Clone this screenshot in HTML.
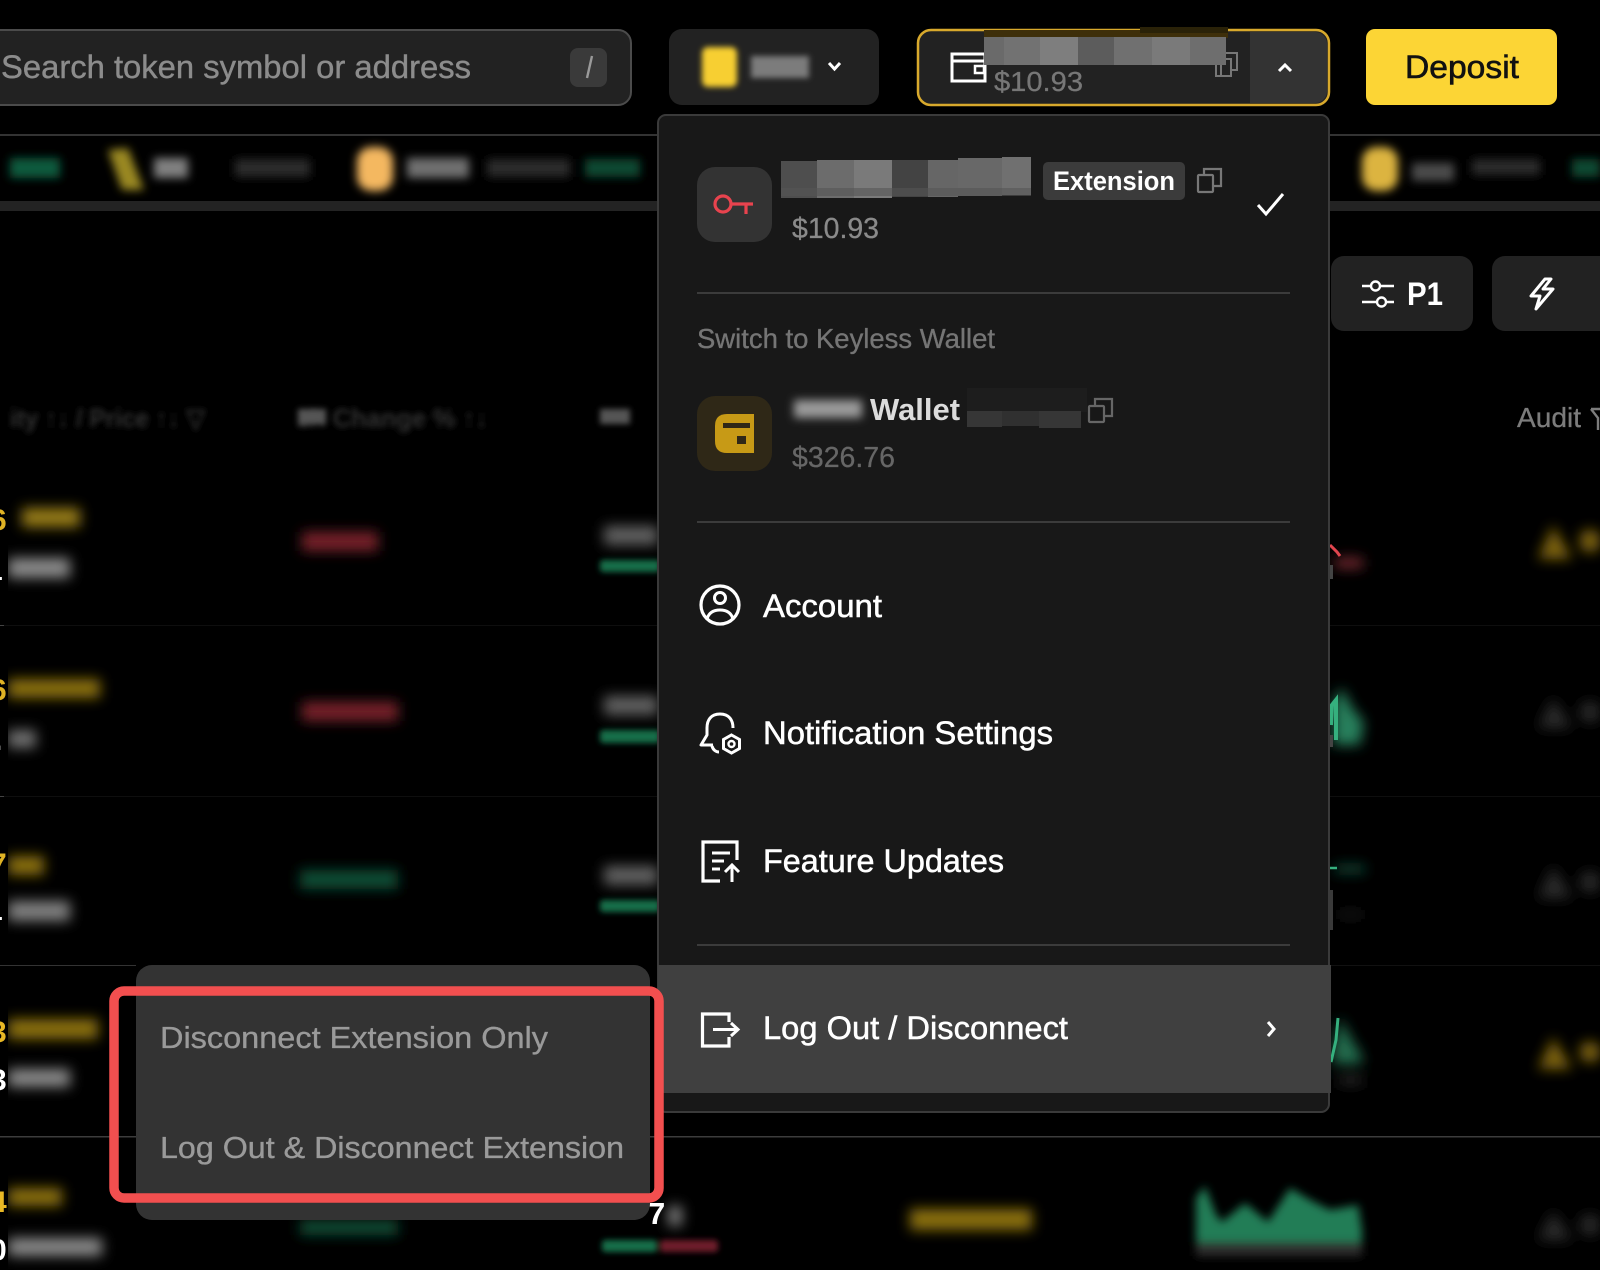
<!DOCTYPE html>
<html><head><meta charset="utf-8"><title>Wallet menu</title>
<style>
html,body{margin:0;padding:0;background:#000;width:1600px;height:1270px;overflow:hidden}
svg{display:block}
text{font-family:"Liberation Sans",sans-serif}
.m{fill:#fff;stroke:#fff;stroke-width:.5}
</style></head><body>
<svg width="1600" height="1270" viewBox="0 0 1600 1270" xmlns="http://www.w3.org/2000/svg">
<defs>
<filter id="b" filterUnits="userSpaceOnUse" x="-40" y="-40" width="1700" height="1350"><feGaussianBlur stdDeviation="6.500"/></filter>
<filter id="s" filterUnits="userSpaceOnUse" x="-40" y="-40" width="1700" height="1350"><feGaussianBlur stdDeviation="4.500"/></filter>
<filter id="t" filterUnits="userSpaceOnUse" x="-40" y="-40" width="1700" height="1350"><feGaussianBlur stdDeviation="3"/></filter>
<clipPath id="cl"><rect x="8" y="0" width="1600" height="1270"/></clipPath>
<clipPath id="dg"><rect x="0" y="0" width="7" height="1270"/></clipPath>
</defs>
<rect width="1600" height="1270" fill="#000"/>

<!-- search -->
<rect x="-20" y="30" width="651" height="75" rx="13" fill="#222" stroke="#4b4b4b" stroke-width="2"/>
<text x="1" y="78" font-size="32" fill="#8c8c8c" stroke="#8c8c8c" stroke-width=".4" textLength="470" lengthAdjust="spacingAndGlyphs">Search token symbol or address</text>
<rect x="570" y="48" width="37" height="39" rx="8" fill="#3a3a3a"/>
<path d="M587 78L592 56" stroke="#9a9a9a" stroke-width="2.400" fill="none"/>

<!-- chain -->
<rect x="669" y="29" width="210" height="76" rx="13" fill="#222"/>
<g filter="url(#t)">
<rect x="702" y="47" width="35" height="40" rx="6" fill="#f7cf30"/>
<rect x="751" y="56" width="58" height="22" fill="#7c7c7c"/>
</g>
<path d="M829 63L834.500 69L840 63" fill="none" stroke="#fff" stroke-width="3"/>

<!-- wallet button -->
<rect x="918" y="30" width="411" height="75" rx="13" fill="#222" stroke="#d8a92c" stroke-width="2.500"/>
<path d="M1250 32H1316a12 12 0 0 1 11 11V92a12 12 0 0 1-11 11H1250Z" fill="#333"/>
<path d="M1279 71L1285 65L1291 71" fill="none" stroke="#fff" stroke-width="3"/>
<path d="M985 54H952V81H985V54M952 61H985" fill="none" stroke="#fff" stroke-width="3"/>
<rect x="975" y="66" width="9" height="7" fill="none" stroke="#fff" stroke-width="2.500"/>
<path d="M1221 59V76H1216M1221 59V53H1237V70H1231" fill="none" stroke="#777" stroke-width="2"/>
<rect x="1216" y="59" width="15" height="17" fill="none" stroke="#777" stroke-width="2"/>
<rect x="984" y="30" width="244" height="8" fill="#3e2f0a"/>
<rect x="1140" y="27" width="88" height="6" fill="#2a2208"/>
<rect x="984" y="37" width="20" height="28" fill="#6a6a6a"/>
<rect x="1004" y="37" width="36" height="28" fill="#727272"/>
<rect x="1040" y="37" width="38" height="28" fill="#7e7e7e"/>
<rect x="1078" y="37" width="36" height="28" fill="#5c5c5c"/>
<rect x="1114" y="37" width="38" height="28" fill="#707070"/>
<rect x="1152" y="37" width="38" height="28" fill="#7a7a7a"/>
<rect x="1190" y="37" width="36" height="28" fill="#6e6e6e"/>
<text x="994" y="91" font-size="28" fill="#777" stroke="#777" stroke-width=".3" textLength="89" lengthAdjust="spacingAndGlyphs">$10.93</text>

<!-- deposit -->
<rect x="1366" y="29" width="191" height="76" rx="9" fill="#fcd535"/>
<text x="1405" y="78" font-size="32" fill="#111" stroke="#111" stroke-width=".6" textLength="114" lengthAdjust="spacingAndGlyphs">Deposit</text>

<!-- ticker -->
<rect x="0" y="134" width="1600" height="2" fill="#333"/>
<rect x="0" y="201" width="1600" height="10" fill="#232323"/>
<g filter="url(#s)">
<rect x="10" y="158" width="50" height="20" fill="#0f5a3c"/>
<path d="M108 150L128 148L144 190H122Z" fill="#9a8824"/>
<rect x="154" y="158" width="34" height="20" fill="#808080"/>
<rect x="235" y="159" width="75" height="18" fill="#2c2c2c"/>
<rect x="357" y="147" width="36" height="44" rx="14" fill="#f4b860"/>
<rect x="407" y="158" width="62" height="20" fill="#707070"/>
<rect x="487" y="159" width="83" height="18" fill="#2a2a2a"/>
<rect x="585" y="159" width="55" height="18" fill="#0c4a32"/>
<rect x="1362" y="147" width="36" height="44" rx="14" fill="#dcb440"/>
<rect x="1412" y="163" width="42" height="18" fill="#4c4c4c"/>
<rect x="1472" y="159" width="68" height="16" fill="#2a2a2a"/>
<rect x="1572" y="159" width="28" height="18" fill="#0c4a32"/>
</g>

<!-- table header blur -->
<g filter="url(#t)" font-size="26" font-weight="700">
<text x="10" y="427" fill="#333" textLength="195" lengthAdjust="spacingAndGlyphs">ity ↑↓ / Price ↑↓ ▽</text>
<text x="296" y="427" fill="#333" textLength="192" lengthAdjust="spacingAndGlyphs">1h Change % ↑↓</text>
<rect x="298" y="409" width="28" height="15" fill="#555"/>
<rect x="600" y="409" width="30" height="15" fill="#555"/>
</g>

<!-- rows -->
<rect x="0" y="625" width="660" height="1" fill="#0e0e0e"/>
<rect x="0" y="796" width="660" height="1" fill="#0e0e0e"/>
<rect x="0" y="625" width="4" height="1" fill="#444"/>
<rect x="0" y="796" width="4" height="1" fill="#444"/>
<rect x="0" y="965" width="136" height="1" fill="#333"/>
<rect x="0" y="1136" width="1600" height="1.500" fill="#3c3c3c"/>
<rect x="1329" y="625" width="271" height="1" fill="#0e0e0e"/>
<rect x="1329" y="796" width="271" height="1" fill="#0e0e0e"/>
<rect x="1329" y="965" width="271" height="1" fill="#111"/>

<g filter="url(#b)" clip-path="url(#cl)">
<rect x="22" y="508" width="58" height="19" fill="#967b12"/>
<rect x="8" y="558" width="62" height="20" fill="#8a8a8a"/>
<rect x="302" y="532" width="76" height="19" fill="#78202a"/>
<rect x="604" y="526" width="54" height="19" fill="#606060"/>
<rect x="8" y="679" width="92" height="19" fill="#8a7010"/>
<rect x="8" y="730" width="28" height="18" fill="#707070"/>
<rect x="302" y="702" width="96" height="19" fill="#78202a"/>
<rect x="604" y="696" width="54" height="19" fill="#606060"/>
<rect x="8" y="856" width="36" height="19" fill="#8a7010"/>
<rect x="8" y="901" width="62" height="20" fill="#808080"/>
<rect x="300" y="870" width="98" height="19" fill="#0c4e34"/>
<rect x="604" y="866" width="54" height="19" fill="#606060"/>
<rect x="8" y="1019" width="90" height="20" fill="#8a7010"/>
<rect x="8" y="1069" width="62" height="18" fill="#8a8a8a"/>
<rect x="8" y="1188" width="54" height="18" fill="#8a7010"/>
<rect x="8" y="1238" width="94" height="18" fill="#8a8a8a"/>
<rect x="300" y="1220" width="98" height="15" fill="#0c4e34"/>
<rect x="910" y="1209" width="122" height="21" fill="#8a7010"/>
<rect x="668" y="1206" width="14" height="20" fill="#7a7a7a"/>
<path d="M1538 559L1553 525L1572 559Z" fill="#7e6410"/>
<rect x="1580" y="530" width="20" height="22" rx="8" fill="#7e6410"/>
<path d="M1538 728L1553 698L1572 728Z" fill="#2c2c2c"/>
<rect x="1580" y="702" width="20" height="20" rx="8" fill="#2c2c2c"/>
<path d="M1538 898L1553 866L1572 898Z" fill="#2c2c2c"/>
<rect x="1580" y="872" width="20" height="20" rx="8" fill="#2c2c2c"/>
<path d="M1538 1069L1553 1037L1572 1069Z" fill="#7e6410"/>
<rect x="1580" y="1042" width="20" height="20" rx="8" fill="#7e6410"/>
<path d="M1538 1240L1553 1211L1572 1240Z" fill="#2c2c2c"/>
<rect x="1580" y="1215" width="20" height="20" rx="8" fill="#2c2c2c"/>
<rect x="1335" y="558" width="28" height="10" fill="#7a2a30"/>
<path d="M1333 745L1334 700L1342 688L1352 708L1364 722L1360 745Z" fill="#277f5c"/>
<rect x="1335" y="866" width="30" height="6" fill="#186248"/>
<rect x="1338" y="912" width="25" height="5" fill="#222"/>
<path d="M1333 1048L1340 1018L1352 1040L1362 1056V1064H1333Z" fill="#206c4d"/>
<rect x="1338" y="1076" width="25" height="8" fill="#2a2a2a"/>
</g>
<g filter="url(#t)">
<rect x="600" y="560" width="60" height="12" rx="3" fill="#126e48"/>
<rect x="600" y="730" width="60" height="13" rx="3" fill="#126e48"/>
<rect x="600" y="900" width="60" height="12" rx="3" fill="#126e48"/>
<rect x="602" y="1240" width="55" height="12" rx="3" fill="#126e48"/>
<rect x="660" y="1240" width="58" height="12" rx="3" fill="#6e1c2a"/>
</g>
<g filter="url(#s)">
<rect x="1196" y="1234" width="166" height="22" fill="#2e2e2e"/>
<path d="M1196 1242V1198L1205 1186L1216 1215L1222 1222L1245 1203L1268 1222L1290 1188L1310 1200L1330 1210L1358 1205L1362 1230V1242Z" fill="#237d57"/>
</g>
<path d="M1330 545L1337 552L1340 556" stroke="#e0454e" stroke-width="3" fill="none"/>
<path d="M1331 725L1332 705L1336 700V740" stroke="#35b07e" stroke-width="4" fill="none"/>
<path d="M1330 868H1337" stroke="#35b07e" stroke-width="2.500" fill="none"/>
<path d="M1331 1062L1336 1040L1338 1018" stroke="#35b07e" stroke-width="3" fill="none"/>
<rect x="1330" y="565" width="3" height="14" fill="#444"/>
<rect x="1330" y="735" width="3" height="12" fill="#444"/>
<rect x="1330" y="890" width="3" height="40" fill="#3a3a3a"/>
<text x="648" y="1224" font-size="31" font-weight="700" fill="#fff">7</text>

<g font-size="30" font-weight="700" clip-path="url(#dg)">
<text x="-10" y="530" fill="#e0b325">6</text><text x="-14" y="580" fill="#fff">1</text>
<text x="-10" y="700" fill="#e0b325">6</text><text x="-6" y="750" fill="#fff">.</text>
<text x="-10" y="874" fill="#e0b325">7</text><text x="-14" y="920" fill="#fff">1</text>
<text x="-10" y="1042" fill="#e8b825">3</text><text x="-10" y="1090" fill="#fff">3</text>
<text x="-10" y="1212" fill="#e8b825">4</text><text x="-10" y="1260" fill="#fff">0</text>
</g>

<!-- P1 / bolt -->
<rect x="1331" y="256" width="142" height="75" rx="13" fill="#222"/>
<path d="M1362 286H1370M1381 286H1394M1362 302H1376M1387 302H1394" stroke="#fff" stroke-width="2.600" fill="none"/>
<circle cx="1375.500" cy="286" r="4.500" fill="none" stroke="#fff" stroke-width="2.400"/>
<circle cx="1381.500" cy="302" r="4.500" fill="none" stroke="#fff" stroke-width="2.400"/>
<text x="1407" y="305" font-size="32" font-weight="700" fill="#fff" textLength="36" lengthAdjust="spacingAndGlyphs">P1</text>
<rect x="1492" y="256" width="130" height="75" rx="13" fill="#222"/>
<path d="M1545 279L1531 296H1540L1536 309L1553 289H1543L1551 279Z" fill="none" stroke="#fff" stroke-width="3" stroke-linejoin="round"/>
<text x="1517" y="427" font-size="28" fill="#7c7c7c" stroke="#7c7c7c" stroke-width=".3" textLength="64" lengthAdjust="spacingAndGlyphs">Audit</text>
<path d="M1591 409H1600M1591 409L1598 418V430" fill="none" stroke="#7c7c7c" stroke-width="2.400"/>

<!-- dropdown -->
<rect x="658" y="115" width="671" height="997" rx="8" fill="#181818" stroke="#3a3a3a" stroke-width="2"/>

<rect x="697" y="167" width="75" height="75" rx="18" fill="#333"/>
<circle cx="723" cy="204" r="8" fill="none" stroke="#e8434e" stroke-width="3.200"/>
<path d="M731 204H753M746 204V214" fill="none" stroke="#e8434e" stroke-width="3.200"/>

<rect x="781" y="161" width="36" height="37" fill="#4e4e4e"/>
<rect x="817" y="160" width="37" height="38" fill="#6c6c6c"/>
<rect x="854" y="160" width="38" height="38" fill="#7a7a7a"/>
<rect x="892" y="160" width="36" height="37" fill="#434343"/>
<rect x="928" y="160" width="30" height="37" fill="#666"/>
<rect x="958" y="158" width="44" height="38" fill="#686868"/>
<rect x="1002" y="157" width="29" height="38" fill="#707070"/>
<rect x="781" y="188" width="250" height="8" fill="#555" opacity=".6"/>
<text x="792" y="238" font-size="29" fill="#8a8a8a" stroke="#8a8a8a" stroke-width=".3" textLength="87" lengthAdjust="spacingAndGlyphs">$10.93</text>

<rect x="1043" y="162" width="142" height="38" rx="5" fill="#3b3b3b"/>
<text x="1053" y="190" font-size="27" font-weight="700" fill="#fff" textLength="122" lengthAdjust="spacingAndGlyphs">Extension</text>
<rect x="1198" y="175" width="15" height="17" rx="1" fill="none" stroke="#777" stroke-width="2.200"/>
<path d="M1204 175V169H1221V186H1213" fill="none" stroke="#777" stroke-width="2.200"/>
<path d="M1258 205L1266 214L1283 194" fill="none" stroke="#fff" stroke-width="3"/>

<rect x="697" y="292" width="593" height="2" fill="#3b3b3b"/>
<text x="697" y="348" font-size="28" fill="#757575" stroke="#757575" stroke-width=".35" textLength="298" lengthAdjust="spacingAndGlyphs">Switch to Keyless Wallet</text>

<rect x="697" y="396" width="75" height="75" rx="18" fill="#2f2817"/>
<path d="M727 414H754V453H727Q715 453 715 441V426Q715 414 727 414Z" fill="#c79a16"/>
<rect x="723" y="423" width="27" height="5" fill="#2f2817"/>
<rect x="737" y="436" width="9" height="8" fill="#2f2817"/>
<rect x="794" y="400" width="68" height="18" fill="#9a9a9a" filter="url(#s)"/>
<text x="870" y="420" font-size="31" font-weight="700" fill="#dcdcdc" textLength="90" lengthAdjust="spacingAndGlyphs">Wallet</text>
<rect x="967" y="388" width="120" height="24" fill="#1d1d1d"/>
<rect x="967" y="411" width="35" height="16" fill="#363636"/>
<rect x="1002" y="411" width="37" height="15" fill="#303030"/>
<rect x="1039" y="411" width="42" height="17" fill="#363636"/>
<rect x="1089" y="406" width="15" height="16" rx="1" fill="none" stroke="#666" stroke-width="2.200"/>
<path d="M1095 406V399H1112V416H1104" fill="none" stroke="#666" stroke-width="2.200"/>
<text x="792" y="467" font-size="29" fill="#666" stroke="#666" stroke-width=".3" textLength="103" lengthAdjust="spacingAndGlyphs">$326.76</text>

<rect x="697" y="521" width="593" height="2" fill="#3b3b3b"/>

<!-- Account -->
<circle cx="720" cy="605" r="19" fill="none" stroke="#fff" stroke-width="3.200"/>
<circle cx="720" cy="598" r="5.500" fill="none" stroke="#fff" stroke-width="3"/>
<path d="M707 619C709 612 714 610 720 610C726 610 731 612 733 619" fill="none" stroke="#fff" stroke-width="3"/>
<text class="m" x="763" y="617" font-size="32" textLength="119" lengthAdjust="spacingAndGlyphs">Account</text>

<!-- Notification -->
<path d="M733 728C733 720 729 714 720 714C711 714 707 720 707 728V735L701 745H713M712 746C713 750 716 752 719 752" fill="none" stroke="#fff" stroke-width="3" stroke-linejoin="round"/>
<path d="M731.500 735L739.500 739.500V748.500L731.500 753L723.500 748.500V739.500Z" fill="#181818" stroke="#fff" stroke-width="3"/>
<circle cx="731.500" cy="744" r="3" fill="none" stroke="#fff" stroke-width="2.400"/>
<text class="m" x="763" y="744" font-size="32" textLength="290" lengthAdjust="spacingAndGlyphs">Notification Settings</text>

<!-- Feature -->
<path d="M720 881H703V842H737V860" fill="none" stroke="#fff" stroke-width="3.200"/>
<path d="M712 853H730M712 861H724M712 869H720" fill="none" stroke="#fff" stroke-width="3"/>
<path d="M732 882V866M725 872L732 865L739 872" fill="none" stroke="#fff" stroke-width="3"/>
<text class="m" x="763" y="872" font-size="32" textLength="241" lengthAdjust="spacingAndGlyphs">Feature Updates</text>

<rect x="697" y="944" width="593" height="2" fill="#3b3b3b"/>

<!-- Logout row -->
<rect x="658" y="965" width="673" height="128" fill="#404040"/>
<path d="M729 1022V1014H702.500V1046H729V1037" fill="none" stroke="#fff" stroke-width="3.200"/>
<path d="M713 1029.500H738M731 1023L738 1029.500L731 1036" fill="none" stroke="#fff" stroke-width="3"/>
<text class="m" x="763" y="1039" font-size="32" textLength="305" lengthAdjust="spacingAndGlyphs">Log Out / Disconnect</text>
<path d="M1268 1022L1274 1029L1268 1036" fill="none" stroke="#fff" stroke-width="3"/>

<!-- submenu -->
<rect x="136" y="965" width="514" height="255" rx="16" fill="#333"/>
<text x="160" y="1048" font-size="31" fill="#9a9a9a" stroke="#9a9a9a" stroke-width=".35" textLength="388" lengthAdjust="spacingAndGlyphs">Disconnect Extension Only</text>
<text x="160" y="1158" font-size="31" fill="#9a9a9a" stroke="#9a9a9a" stroke-width=".35" textLength="464" lengthAdjust="spacingAndGlyphs">Log Out &amp; Disconnect Extension</text>

<!-- red highlight -->
<rect x="114" y="991" width="545" height="207" rx="10" fill="none" stroke="#f24f4f" stroke-width="9.500"/>
</svg>
</body></html>
